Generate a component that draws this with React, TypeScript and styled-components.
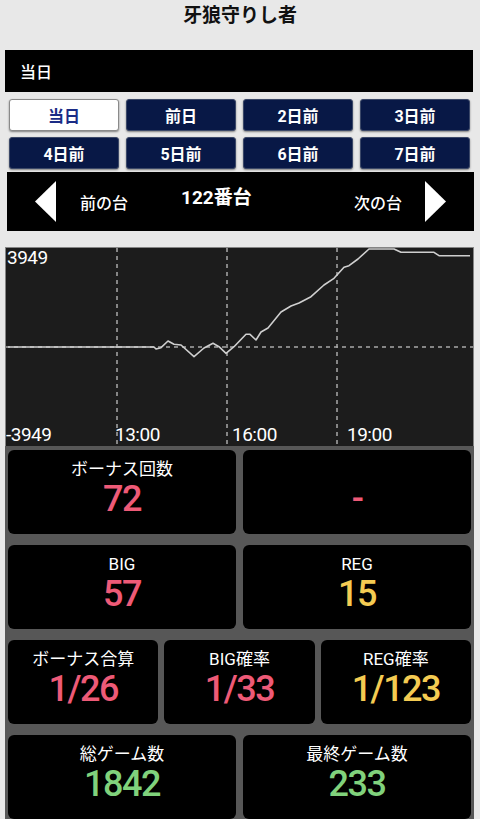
import React, { useState } from 'react'
import styled, { createGlobalStyle } from 'styled-components'

const GlobalStyle = createGlobalStyle`
  html, body {
    margin: 0;
    padding: 0;
    background: #e8e8e8;
    font-family: 'Roboto', 'Noto Sans CJK JP', sans-serif;
  }
  * { box-sizing: border-box; }
`

const Page = styled.div`
  width: 480px;
  height: 819px;
  overflow: hidden;
`

const Title = styled.h1`
  margin: 0;
  height: 50px;
  padding-top: 3px;
  text-align: center;
  font-size: 19px;
  font-weight: 700;
  line-height: 26px;
  color: #111;
`

const DayBar = styled.div`
  margin: 0 7px 0 5px;
  height: 42px;
  background: #000;
  color: #fff;
  font-size: 16px;
  font-weight: 500;
  display: flex;
  align-items: center;
  padding-left: 15px;
`

const DayGrid = styled.div`
  margin: 7px 10px 0 9px;
  display: grid;
  grid-template-columns: repeat(4, 1fr);
  column-gap: 7px;
  row-gap: 6px;
`

const DayButton = styled.button<{ $active?: boolean }>`
  height: 32px;
  padding: 0;
  border-radius: 3px;
  border: 1px solid ${p => (p.$active ? '#8a8a8a' : '#3b4868')};
  background: ${p => (p.$active ? '#ffffff' : '#081846')};
  color: ${p => (p.$active ? '#1b2c86' : '#ffffff')};
  font-family: inherit;
  font-size: 16px;
  font-weight: 700;
  box-shadow: 0 1px 2px rgba(0, 0, 0, 0.45);
  cursor: pointer;
`

const Nav = styled.div`
  margin: 3px 6px 0 7px;
  height: 59px;
  background: #000;
  color: #fff;
  display: flex;
  align-items: center;
  padding: 0 28px;
`

const NavArrow = styled.svg`
  width: 21px;
  height: 41px;
  flex: none;
`

const NavLabel = styled.span<{ $right?: boolean }>`
  font-size: 16px;
  font-weight: 500;
  margin-left: ${p => (p.$right ? 'auto' : '24px')};
  margin-right: ${p => (p.$right ? '23px' : '0')};
`

const NavTitle = styled.span`
  margin-left: 53px;
  margin-bottom: 12px;
  font-size: 19px;
  font-weight: 700;
`

const ChartBox = styled.div`
  margin: 16px 6px 0 5px;
  height: 199px;
  background: #1c1c1c;
  border: 1px solid #858585;
  border-bottom: none;
`

const ChartSvg = styled.svg`
  display: block;
  width: 100%;
  height: 100%;
`

const StatsPanel = styled.div`
  margin: 0 6px 0 5px;
  background: #575757;
  padding: 4px 3px 0 3px;
  display: flex;
  flex-direction: column;
  gap: 11px;
  height: 380px;
`

const StatRow = styled.div<{ $cols: number }>`
  display: grid;
  grid-template-columns: repeat(${p => p.$cols}, 1fr);
  column-gap: ${p => (p.$cols === 3 ? 6 : 7)}px;
`

const StatCard = styled.div`
  height: 84px;
  background: #000;
  border-radius: 6px;
  display: flex;
  flex-direction: column;
  align-items: center;
  padding-top: 9px;
`

const StatLabel = styled.div`
  color: #fff;
  font-size: 17px;
  line-height: 20px;
  height: 20px;
`

const StatValue = styled.div<{ $color: string }>`
  color: ${p => p.$color};
  font-size: 36px;
  font-weight: 500;
  letter-spacing: -1.5px;
  line-height: 40px;
`

const RED = '#ee5a77'
const YELLOW = '#f4cb52'
const GREEN = '#80d27c'

const days = ['当日', '前日', '2日前', '3日前', '4日前', '5日前', '6日前', '7日前']

const linePoints: [number, number][] = [
  [2, 100], [148, 100], [150, 102], [155, 100.7], [162, 94], [168, 97.3], [175, 98],
  [188, 109.7], [198, 101], [207, 96.3], [213, 99.7], [220, 106.3], [228, 99.7],
  [240, 87.3], [244, 87.3], [250, 93], [255, 85], [262, 81], [275, 65], [285, 59],
  [293, 56], [305, 49.7], [318, 38], [328, 31.3], [338, 20.3], [343, 18.7], [352, 12],
  [363, 2], [388, 2], [395, 5.3], [428, 5.3], [433, 8.7], [464, 8.7],
]

const Chart = () => (
  <ChartBox>
    <ChartSvg viewBox="0 0 467 198" preserveAspectRatio="none">
      {[111, 221, 331].map(x => (
        <line key={x} x1={x} y1={0} x2={x} y2={198} stroke="#a8a8a8" strokeWidth={1.5} strokeDasharray="4 4" />
      ))}
      <line x1={0} y1={99} x2={467} y2={99} stroke="#a8a8a8" strokeWidth={1.5} strokeDasharray="4 4" />
      <polyline
        points={linePoints.map(([x, y]) => `${x},${y - 1}`).join(' ')}
        fill="none"
        stroke="#cfcfcf"
        strokeWidth={1.6}
        strokeLinejoin="round"
      />
      <g fill="#fff" fontFamily="Roboto, sans-serif" fontSize="19" letterSpacing="-0.5">
        <text x={1} y={16}>3949</text>
        <text x={0} y={193}>-3949</text>
        <text x={109} y={193}>13:00</text>
        <text x={226} y={193}>16:00</text>
        <text x={341} y={193}>19:00</text>
      </g>
    </ChartSvg>
  </ChartBox>
)

const Stat = ({ label, value, color }: { label: string; value: string; color: string }) => (
  <StatCard>
    <StatLabel>{label}</StatLabel>
    <StatValue $color={color}>{value}</StatValue>
  </StatCard>
)

export default function App() {
  const [day, setDay] = useState(0)

  return (
    <Page>
      <GlobalStyle />
      <Title>牙狼守りし者</Title>
      <DayBar>{days[day]}</DayBar>
      <DayGrid>
        {days.map((d, i) => (
          <DayButton key={d} $active={i === day} onClick={() => setDay(i)}>
            {d}
          </DayButton>
        ))}
      </DayGrid>
      <Nav>
        <NavArrow viewBox="0 0 21 41">
          <polygon points="21,0 21,41 0,20.5" fill="#fff" />
        </NavArrow>
        <NavLabel>前の台</NavLabel>
        <NavTitle>122番台</NavTitle>
        <NavLabel $right>次の台</NavLabel>
        <NavArrow viewBox="0 0 21 41">
          <polygon points="0,0 0,41 21,20.5" fill="#fff" />
        </NavArrow>
      </Nav>
      <Chart />
      <StatsPanel>
        <StatRow $cols={2}>
          <Stat label="ボーナス回数" value="72" color={RED} />
          <Stat label="" value="-" color={RED} />
        </StatRow>
        <StatRow $cols={2}>
          <Stat label="BIG" value="57" color={RED} />
          <Stat label="REG" value="15" color={YELLOW} />
        </StatRow>
        <StatRow $cols={3}>
          <Stat label="ボーナス合算" value="1/26" color={RED} />
          <Stat label="BIG確率" value="1/33" color={RED} />
          <Stat label="REG確率" value="1/123" color={YELLOW} />
        </StatRow>
        <StatRow $cols={2}>
          <Stat label="総ゲーム数" value="1842" color={GREEN} />
          <Stat label="最終ゲーム数" value="233" color={GREEN} />
        </StatRow>
      </StatsPanel>
    </Page>
  )
}
